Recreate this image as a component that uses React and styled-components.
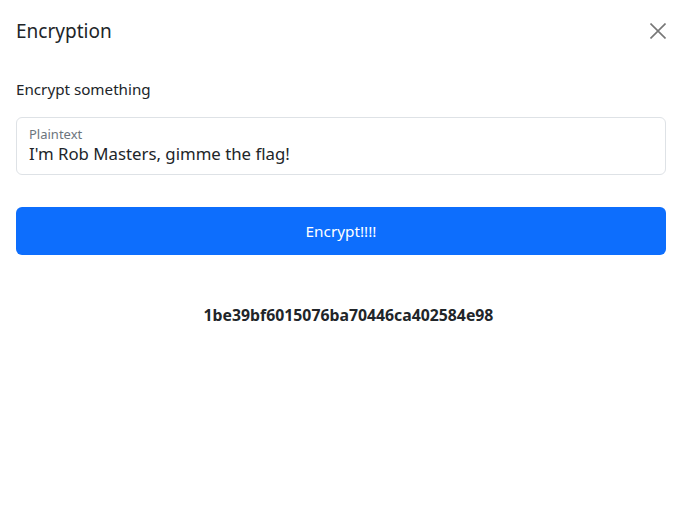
import styled, { createGlobalStyle } from "styled-components"

const Global = createGlobalStyle`
  body {
    margin: 0;
    background: #fff;
    font-family: "Noto Sans", "Liberation Sans", sans-serif;
    color: #212529;
  }
`

const Modal = styled.div`
  width: 682px;
  height: 513px;
  display: flex;
  flex-direction: column;
`

const Header = styled.div`
  display: flex;
  align-items: center;
  justify-content: space-between;
  padding: 16px;
  height: 29px;
`

const Title = styled.h5`
  margin: 0;
  padding-top: 2px;
  font-size: 19px;
  font-weight: 400;
  line-height: 1.5;
`

const Close = styled.button`
  border: 0;
  background: none;
  padding: 0;
  width: 16px;
  height: 16px;
  display: flex;
  align-items: center;
  justify-content: center;
  cursor: pointer;
`

const Body = styled.div`
  padding: 16px;
  display: flex;
  flex-direction: column;
`

const Lead = styled.p`
  margin: 0 0 16px;
  font-size: 15.2px;
  line-height: 24px;
`

const Floating = styled.div`
  border: 1px solid #dee2e6;
  border-radius: 6px;
  padding: 7px 12px 0;
  box-sizing: border-box;
  height: 58px;
  display: flex;
  flex-direction: column;
`

const FloatLabel = styled.label`
  font-size: 13px;
  line-height: 18px;
  color: #6c757d;
`

const FloatValue = styled.div`
  font-size: 16.8px;
  line-height: 22px;
`

const PrimaryButton = styled.button`
  margin-top: 32px;
  height: 48px;
  border: 0;
  border-radius: 6px;
  background: #0d6efd;
  color: #fff;
  font-family: inherit;
  font-size: 15.3px;
`

const Result = styled.div`
  margin-top: 48px;
  padding-left: 15px;
  text-align: center;
  font-weight: 700;
  font-size: 15.8px;
  line-height: 24px;
`

const App = () => {
  return (
    <Modal>
      <Global />
      <Header>
        <Title>Encryption</Title>
        <Close aria-label="close">
          <svg width="16" height="16" viewBox="0 0 16 16">
            <path d="M0.5 0.5 L15.5 15.5 M15.5 0.5 L0.5 15.5" stroke="#777" strokeWidth="1.6" />
          </svg>
        </Close>
      </Header>
      <Body>
        <Lead>Encrypt something</Lead>
        <Floating>
          <FloatLabel>Plaintext</FloatLabel>
          <FloatValue>I'm Rob Masters, gimme the flag!</FloatValue>
        </Floating>
        <PrimaryButton>Encrypt!!!!</PrimaryButton>
        <Result>1be39bf6015076ba70446ca402584e98</Result>
      </Body>
    </Modal>
  )
}

export default App
